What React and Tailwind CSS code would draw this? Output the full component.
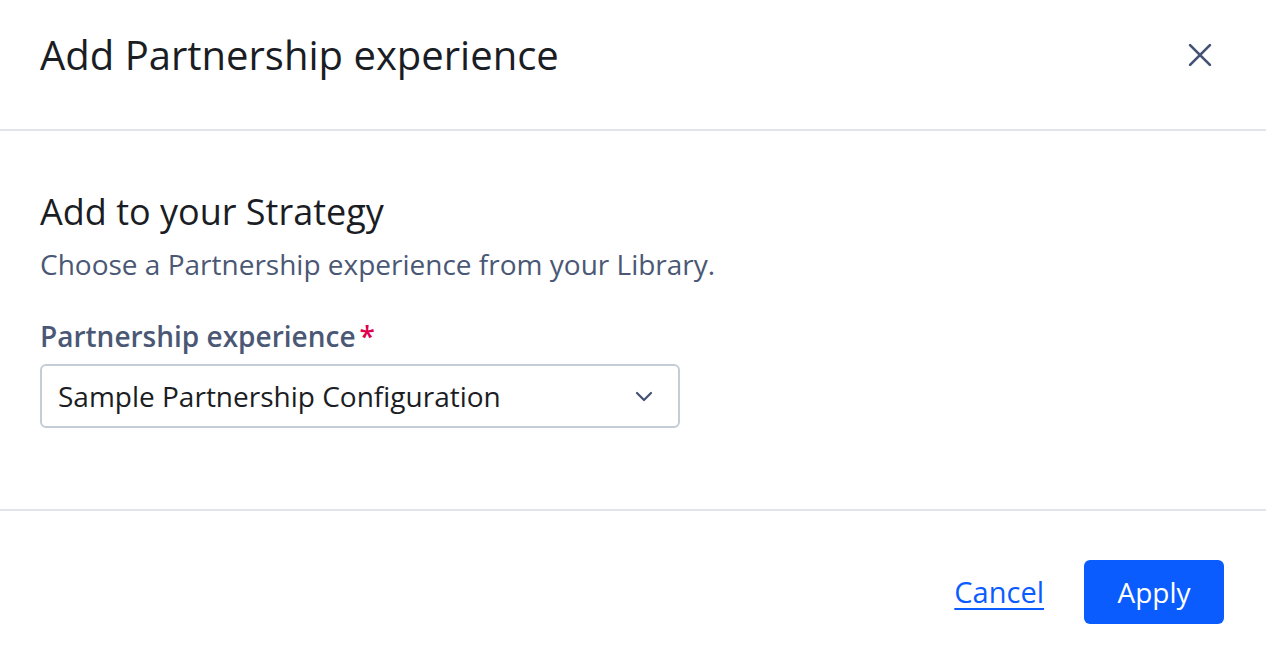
import React from "react";

export default function App() {
  return (
    <div className="w-[1266px] h-[648px] bg-white flex flex-col" style={{ fontFamily: '"Open Sans", "Noto Sans", sans-serif' }}>
      <div className="h-[131px] shrink-0 flex items-center justify-between pl-10 pr-[49px] pb-[20px] border-b-2 border-[#e1e4ea]">
        <h1 className="text-[40px] leading-[52px] text-[#1b1d24]">Add Partnership experience</h1>
        <svg width="34" height="34" viewBox="0 0 24 24" fill="none" stroke="#445275" strokeWidth="1.9" strokeLinecap="round">
          <path d="M5 5 L19 19 M19 5 L5 19" />
        </svg>
      </div>
      <div className="h-[380px] shrink-0 flex flex-col px-10 pt-[57px] border-b-2 border-[#e1e4ea]">
        <h2 className="text-[36px] leading-[48px] text-[#1b1d24]">Add to your Strategy</h2>
        <p className="mt-[8px] text-[28px] leading-[40px] text-[#4b5875]">Choose a Partnership experience from your Library.</p>
        <label className="mt-[32px] text-[28px] leading-[40px] font-semibold text-[#4b5875]">
          Partnership experience<span className="text-[#e0004d] ml-[4px]">*</span>
        </label>
        <div className="mt-[8px] w-[640px] h-[64px] rounded-[6px] border-2 border-[#c5ccd8] flex items-center justify-between pl-[16px] pr-[22px]">
          <span className="text-[28px] text-[#1b1d24]">Sample Partnership Configuration</span>
          <svg width="24" height="24" viewBox="0 0 24 24" fill="none" stroke="#445275" strokeWidth="2.2" strokeLinecap="round" strokeLinejoin="round">
            <path d="M5 9 L12 16 L19 9" />
          </svg>
        </div>
      </div>
      <div className="flex-1 flex items-start justify-end gap-[40px] pr-[42px] pt-[49px]">
        <a href="#" className="h-[64px] flex items-center text-[29px] text-[#0b5cff] underline underline-offset-[5px] decoration-2">Cancel</a>
        <button className="w-[140px] h-[64px] rounded-[6px] bg-[#0b5cff] text-white text-[28px] font-medium">Apply</button>
      </div>
    </div>
  );
}
